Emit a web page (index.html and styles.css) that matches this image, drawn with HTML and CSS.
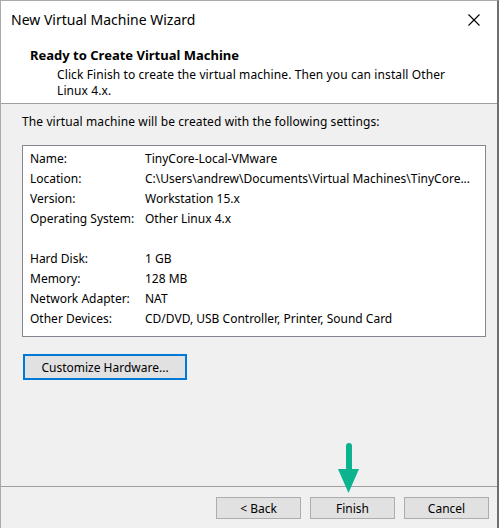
FILE: index.html
```html
<!DOCTYPE html>
<html lang="en">
<head>
    <meta charset="UTF-8">
    <meta name="viewport" content="width=device-width, initial-scale=1.0">
    <title>New Virtual Machine Wizard</title>
    <link rel="stylesheet" href="styles.css">
</head>
<body>
    <div class="window">
        <div class="titlebar">
            <span class="title">New Virtual Machine Wizard</span>
            <svg class="close" width="12" height="12" viewBox="0 0 12 12">
                <path d="M0.5 0.5 L11.5 11.5 M11.5 0.5 L0.5 11.5" stroke="#000" stroke-width="1.1" fill="none"/>
            </svg>
        </div>

        <div class="header">
            <h1>Ready to Create Virtual Machine</h1>
            <p class="subtitle">Click Finish to create the virtual machine. Then you can install Other<br>Linux 4.x.</p>
        </div>

        <div class="content">
            <p class="intro">The virtual machine will be created with the following settings:</p>

            <div class="settings">
                <div class="row"><span class="label">Name:</span><span>TinyCore-Local-VMware</span></div>
                <div class="row"><span class="label">Location:</span><span>C:\Users\andrew\Documents\Virtual Machines\TinyCore...</span></div>
                <div class="row"><span class="label">Version:</span><span>Workstation 15.x</span></div>
                <div class="row"><span class="label">Operating System:</span><span>Other Linux 4.x</span></div>
                <div class="row"></div>
                <div class="row"><span class="label">Hard Disk:</span><span>1 GB</span></div>
                <div class="row"><span class="label">Memory:</span><span>128 MB</span></div>
                <div class="row"><span class="label">Network Adapter:</span><span>NAT</span></div>
                <div class="row"><span class="label">Other Devices:</span><span>CD/DVD, USB Controller, Printer, Sound Card</span></div>
            </div>

            <button type="button" class="customize">Customize Hardware...</button>
        </div>

        <div class="footer">
            <button type="button">&lt; Back</button>
            <button type="button">Finish</button>
            <button type="button">Cancel</button>
        </div>

        <!-- annotation arrow pointing at Finish -->
        <svg class="arrow" width="24" height="56" viewBox="0 0 24 56">
            <line x1="12" y1="6" x2="12" y2="32" stroke="#0db28f" stroke-width="6" stroke-linecap="round"/>
            <polygon points="1,29 22,29 11.5,53" fill="#0db28f"/>
        </svg>
    </div>
</body>
</html>
```

FILE: styles.css
```css
body {
    margin: 0;
    font-family: "Noto Sans", "Open Sans", sans-serif;
    font-size: 12px;
    color: #000;
    background-color: #f0f0f0;
}
.window {
    position: relative;
    box-sizing: border-box;
    width: 499px;
    height: 528px;
    display: flex;
    flex-direction: column;
    background-color: #f0f0f0;
    border-top: 1px solid #aaaaaa;
    border-left: 1px solid #aaaaaa;
    border-right: 2px solid #707070;
}
.titlebar {
    height: 38px;
    display: flex;
    justify-content: space-between;
    align-items: center;
    padding: 0 17px 0 10px;
    background-color: #fff;
}
.title {
    font-size: 14px;
    line-height: 38px;
}
.close {
    display: block;
}
.header {
    background-color: #fff;
    padding: 8px 0 4px 29px;
    border-bottom: 1px solid #a0a0a0;
}
h1 {
    margin: 0;
    font-size: 13px;
    line-height: 17px;
    font-weight: bold;
}
.subtitle {
    margin: 3px 0 0 27px;
    line-height: 16px;
    letter-spacing: 0.1px;
}
.content {
    flex: 1;
    padding: 9px 11px 0 21px;
}
.intro {
    margin: 0;
    line-height: 17px;
    letter-spacing: 0.1px;
}
.settings {
    margin-top: 15px;
    padding: 3px 0 7px 7px;
    background-color: #fff;
    border: 1px solid #828790;
}
.row {
    display: flex;
    height: 20px;
    line-height: 19px;
    white-space: nowrap;
    overflow: hidden;
}
.label {
    flex: none;
    width: 115px;
}
.customize {
    margin-top: 17px;
    margin-left: 1px;
    width: 164px;
    height: 26px;
    padding: 0;
    font-family: inherit;
    font-size: 12px;
    background-color: #e1e1e1;
    border: 2px solid #0078d7;
}
.footer {
    display: flex;
    justify-content: flex-end;
    gap: 9px;
    padding: 10px 8px 9px 0;
    border-top: 1px solid #a0a0a0;
}
.footer button {
    width: 85px;
    height: 22px;
    padding: 0;
    font-family: inherit;
    font-size: 12px;
    background-color: #e1e1e1;
    border: 1px solid #adadad;
}
.arrow {
    position: absolute;
    left: 336px;
    top: 439px;
}
```
